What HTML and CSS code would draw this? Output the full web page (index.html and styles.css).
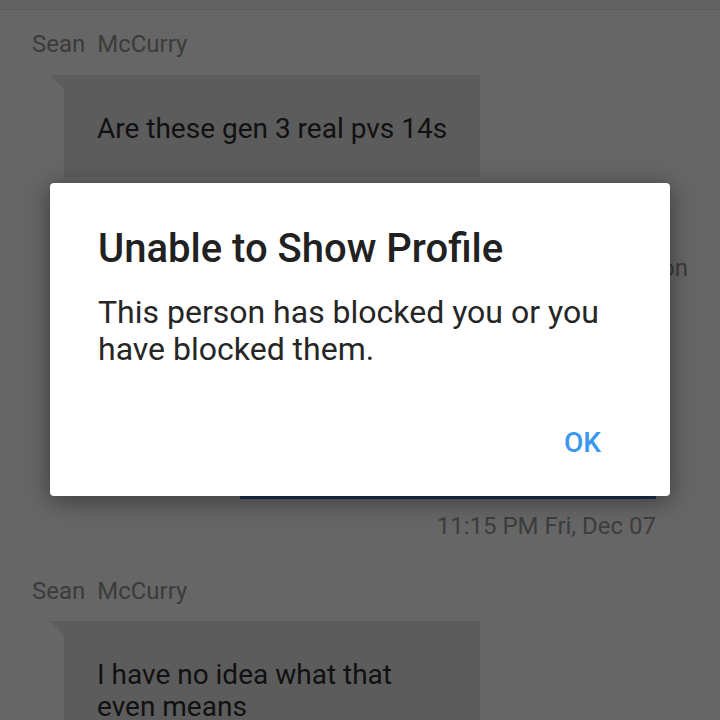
FILE: index.html
```html
<!DOCTYPE html>
<html lang="en">
<head>
  <meta charset="UTF-8" />
  <meta name="viewport" content="width=device-width, initial-scale=1.0" />
  <title>Messages</title>
  <link rel="stylesheet" href="styles.css">
</head>
<body>
  <div class="screen">
    <div class="app-bar"></div>
    <div class="chat">
      <p class="sender">Sean&nbsp; McCurry</p>
      <div class="bubble incoming">
        <p class="bubble-text">Are these gen 3 real pvs 14s</p>
      </div>
      <p class="peek">Jackson</p>
      <div class="bubble outgoing"></div>
      <p class="stamp">11:15 PM Fri, Dec 07</p>
      <p class="sender second">Sean&nbsp; McCurry</p>
      <div class="bubble incoming last">
        <p class="bubble-text">I have no idea what that even means</p>
      </div>
    </div>

    <!-- Blocked profile dialog -->
    <div class="dialog">
      <h2 class="dialog-title">Unable to Show Profile</h2>
      <p class="dialog-body">This person has blocked you or you have blocked them.</p>
      <div class="dialog-actions">
        <button class="dialog-button">OK</button>
      </div>
    </div>
  </div>
</body>
</html>
```

FILE: styles.css
```css
body {
  font-family: Roboto, 'Liberation Sans', sans-serif;
  margin: 0;
  padding: 0;
  background-color: #666666;
  overflow: hidden;
}
p {
  margin: 0;
}
.screen {
  position: relative;
  width: 720px;
  height: 720px;
  overflow: hidden;
}
.app-bar {
  height: 9px;
  background-color: #636363;
  border-bottom: 1px solid #5c5c5c;
}
.chat {
  padding: 0 32px;
}
.sender {
  font-size: 24px;
  line-height: 28px;
  color: #3b3b3b;
  margin-top: 20px;
}
.sender.second {
  margin-top: 38px;
}
.bubble {
  position: relative;
  background-color: #5c5c5c;
}
.incoming {
  width: 416px;
  margin-top: 17px;
  margin-left: 32px;
  padding: 38px 29px 32px 33px;
  box-sizing: border-box;
}
.incoming::before {
  content: '';
  position: absolute;
  left: -14px;
  top: 0;
  border-top: 14px solid #5c5c5c;
  border-left: 14px solid transparent;
}
.incoming.last {
  margin-top: 16px;
  padding-top: 38px;
}
.bubble-text {
  font-size: 28px;
  line-height: 32px;
  color: #111111;
}
.peek {
  margin-top: 77px;
  text-align: right;
  font-size: 24px;
  line-height: 28px;
  color: #3b3b3b;
}
.outgoing {
  width: 416px;
  height: 190px;
  margin: 27px 32px 0 auto;
  background-color: #1c3252;
}
.stamp {
  margin-top: 14px;
  margin-right: 32px;
  text-align: right;
  font-size: 24px;
  line-height: 26px;
  color: #3d3d3d;
}
/* Dialog sits over the dimmed chat */
.dialog {
  position: absolute;
  left: 50px;
  top: 183px;
  width: 620px;
  height: 313px;
  box-sizing: border-box;
  padding: 42px 69px 0 48px;
  background-color: #ffffff;
  border-radius: 4px;
  box-shadow: 0 4px 24px rgba(0, 0, 0, 0.45);
  display: flex;
  flex-direction: column;
}
.dialog-title {
  margin: 0;
  font-size: 40px;
  line-height: 48px;
  font-weight: 500;
  color: #212121;
}
.dialog-body {
  margin-top: 21px;
  font-size: 32px;
  line-height: 37px;
  color: #262626;
}
.dialog-actions {
  display: flex;
  justify-content: flex-end;
  margin-top: 59px;
}
.dialog-button {
  background: none;
  border: none;
  padding: 0;
  font-family: inherit;
  font-size: 28px;
  line-height: 32px;
  font-weight: 500;
  color: #3a97ef;
  cursor: pointer;
}
```
